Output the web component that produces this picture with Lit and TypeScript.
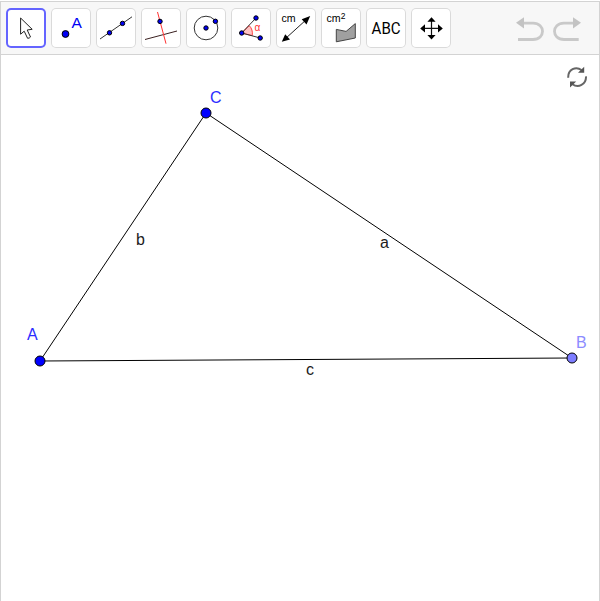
import { LitElement, html, svg, css } from "lit";
import { customElement, state } from "lit/decorators.js";
import { classMap } from "lit/directives/class-map.js";

const dot = (x: number, y: number, r = 2.2) =>
  svg`<circle cx=${x} cy=${y} r=${r} fill="#0000f5" stroke="#000" stroke-width="1"/>`;

const tools = [
  {
    name: "Move",
    icon: svg`<path d="M14.6 10 V26.2 L18.2 23.2 L21.6 30.3 Q23.5 30.3 24.5 29 L21.2 22 L26.2 21.3 Z" fill="#fff" stroke="#222" stroke-width="1"/>`,
  },
  {
    name: "Point",
    icon: svg`${dot(14.5, 26, 3.4)}<text class="a" x="20.5" y="20">A</text>`,
  },
  {
    name: "Line",
    icon: svg`<path d="M4 31 L36 8.8" stroke="#333"/>${dot(13.5, 24.8)}${dot(26.5, 15.4)}`,
  },
  {
    name: "Perpendicular line",
    icon: svg`<path d="M4 31.5 L36 23" stroke="#3a2020"/><path d="M16.5 4 L25 35.7" stroke="#ff3030"/>${dot(19, 13.4)}`,
  },
  {
    name: "Circle with center",
    icon: svg`<circle cx="20" cy="20" r="11.8" fill="none" stroke="#333"/>${dot(20, 20)}${dot(29.4, 13.3)}`,
  },
  {
    name: "Angle",
    icon: svg`<path d="M10.7 25 L18.2 17.6 Q22.2 21.5 21.2 27.6 Z" fill="#ffc4c4" stroke="#ff4040"/><path d="M25 10 L10.7 25 L29.2 30" fill="none" stroke="#333"/>${dot(25, 10)}${dot(10.7, 25)}${dot(29.2, 30)}<text class="alpha" x="23.6" y="22.6">α</text>`,
  },
  {
    name: "Distance",
    icon: svg`<path d="M9 31 L31 11" stroke="#222"/><path d="M5.8 33.8 L9.2 26.3 L14 31.4 Z M34.2 8.1 L25.7 11.2 L30.5 16.4 Z" fill="#000"/><text class="unit" x="5.4" y="14">cm</text>`,
  },
  {
    name: "Area",
    icon: svg`<path d="M15.3 21.4 L25.1 23.4 L34.3 15.6 V30 L15.3 33.8 Z" fill="#a0a0a0" stroke="#444"/><text class="unit" x="5.4" y="14">cm</text><text class="sup" x="19.8" y="11">2</text>`,
  },
  { name: "Text", icon: svg`<text class="abc" x="5.6" y="25.5" textLength="29" lengthAdjust="spacingAndGlyphs">ABC</text>` },
  {
    name: "Move graphics view",
    icon: svg`<path d="M12 20.4 H29 M20.5 12 V29" stroke="#111" stroke-width="1.2"/><path d="M20.5 9.2 L24.6 13.8 H16.4 Z M20.5 31.5 L24.6 27 H16.4 Z M9.2 20.4 L14 16.2 V24.6 Z M31.8 20.4 L27 16.2 V24.6 Z" fill="#000"/>`,
  },
];

@customElement("geo-toolbar")
export class GeoToolbar extends LitElement {
  static styles = css`
    :host {
      display: flex;
      align-items: center;
      justify-content: space-between;
      box-sizing: border-box;
      height: 53px;
      padding: 0 17px 0 5px;
      background: #f7f7f7;
      border-bottom: 1px solid #d3d3d3;
    }
    .tools { display: flex; gap: 5px; }
    .tool {
      width: 40px;
      height: 40px;
      padding: 0;
      border: 0;
      border-radius: 5px;
      background: #fff;
      box-shadow: inset 0 0 0 1px #dadada;
    }
    .selected { box-shadow: inset 0 0 0 2px #6464ff; }
    svg { display: block; }
    text { font-family: "Liberation Sans", Arial, sans-serif; }
    .a { font-size: 15.5px; fill: #0000f5; }
    .alpha { font-size: 10px; fill: #ff3030; }
    .unit { font-size: 10.6px; }
    .sup { font-size: 8.5px; }
    .abc { font-family: Roboto, sans-serif; font-size: 15.8px; }
    .history { display: flex; gap: 8px; padding-top: 4px; }
  `;

  @state() selected = 0;

  render() {
    return html`
      <div class="tools">
        ${tools.map(
          (tool, i) => html`<button
            class=${classMap({ tool: true, selected: i === this.selected })}
            aria-label=${tool.name}
            @click=${() => (this.selected = i)}
          ><svg width="40" height="40" viewBox="0 0 40 40">${tool.icon}</svg></button>`,
        )}
      </div>
      <div class="history">
        <svg width="29" height="26" viewBox="0 0 29 26"><path d="M7 6.2 H17 C29.7 6.2 29.7 22.5 17 22.5 H2" fill="none" stroke="#c9c9c9" stroke-width="2.8"/><path d="M0 5.8 L8 0.2 V11.5 Z" fill="#c3c3c3"/></svg>
        <svg width="29" height="26" viewBox="0 0 29 26"><path d="M21 6.2 H11 C-1.7 6.2 -1.7 22.5 11 22.5 H25.7" fill="none" stroke="#c9c9c9" stroke-width="2.8"/><path d="M28 5.8 L20 0.2 V11.5 Z" fill="#c3c3c3"/></svg>
      </div>
    `;
  }
}

@customElement("geo-canvas")
export class GeoCanvas extends LitElement {
  static styles = css`
    :host { display: block; position: relative; flex: 1; min-height: 0; overflow: hidden; background: #fff; }
    .drawing { display: block; }
    .edge { stroke: #000; stroke-width: 1; }
    .point { stroke: #000; stroke-width: 1; }
    text { font-family: "Liberation Sans", Arial, sans-serif; font-size: 16px; fill: #1c1c1c; }
    .free { fill: #0000ff; }
    .bound { fill: #7d7dff; }
    .label-free { fill: #2c2cff; }
    .label-bound { fill: #8c8cff; }
    .reset { position: absolute; top: 11px; right: 11px; }
  `;

  render() {
    return html`
      <svg class="drawing" width="598" height="546" viewBox="1 55 598 546">
        <path class="edge" fill="none" d="M40 361 L206 113 L572 358 Z" />
        <circle class="point free" cx="40" cy="361" r="5" />
        <circle class="point free" cx="206" cy="113" r="5" />
        <circle class="point bound" cx="572" cy="358" r="5" />
        <text class="label-free" x="27" y="340">A</text>
        <text class="label-free" x="210" y="103">C</text>
        <text class="label-bound" x="576" y="348">B</text>
        <text x="380" y="248">a</text>
        <text x="136" y="245">b</text>
        <text x="306" y="375">c</text>
      </svg>
      <svg class="reset" width="22" height="22" viewBox="0 0 22 22">
        <path d="M2.2 11.8 C1.9 3.5 9.8 -0.2 15.5 4 M20 10.4 C20.3 18.5 12.2 22.4 6.5 18.2" fill="none" stroke="#666" stroke-width="2"/>
        <path d="M18.2 0.8 V6.8 H12 Z M4 21.4 V15.4 H10.2 Z" fill="#555"/>
      </svg>
    `;
  }
}

@customElement("app-root")
export class AppRoot extends LitElement {
  static styles = css`
    :host {
      display: flex;
      flex-direction: column;
      box-sizing: border-box;
      width: 600px;
      height: 600px;
      margin-top: 1px;
      border: 1px solid #d3d3d3;
      border-bottom: 0;
      background: #fff;
    }
  `;

  render() {
    return html`<geo-toolbar></geo-toolbar><geo-canvas></geo-canvas>`;
  }
}
